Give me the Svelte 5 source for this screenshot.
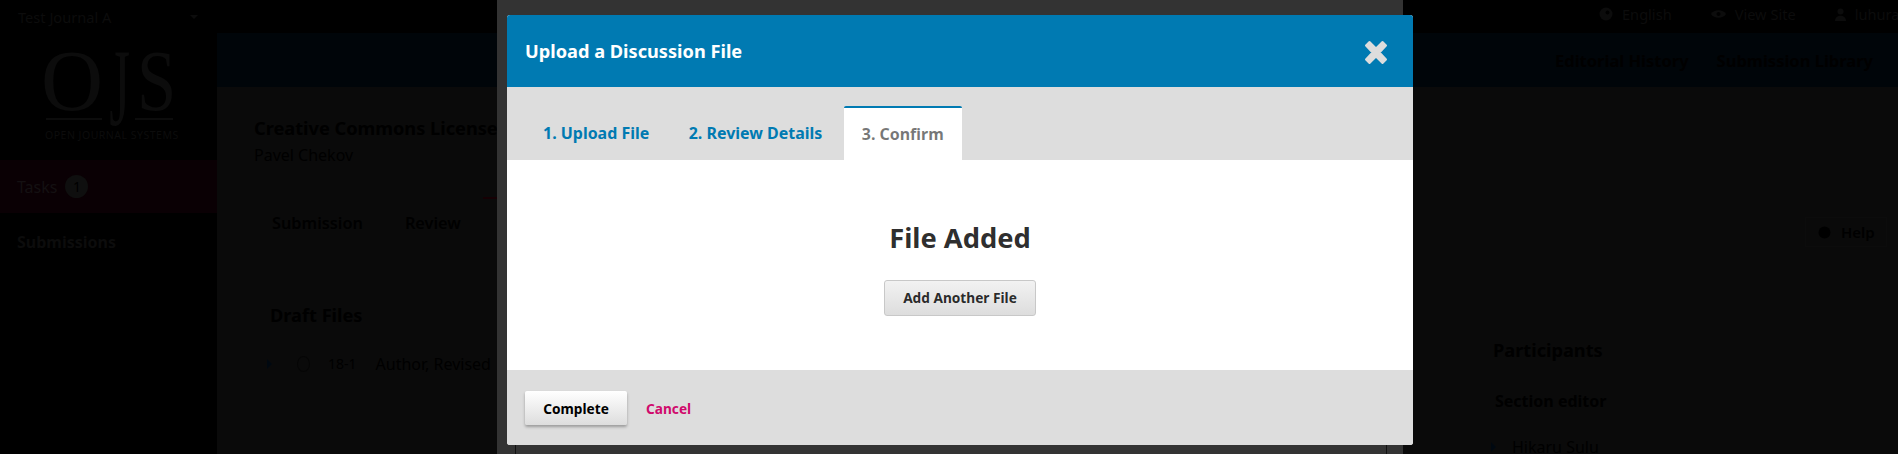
<script>
	const sideNav = [
		{ label: 'Tasks', badge: 1, active: true },
		{ label: 'Submissions' }
	];
	const stageTabs = ['Submission', 'Review'];
	const wizardTabs = ['1. Upload File', '2. Review Details', '3. Confirm'];
</script>

<div class="page">
	<header class="topbar">
		<div class="journal">
			<span>Test Journal A</span>
			<span class="caret"></span>
		</div>
		<div class="user-links">
			<span class="link">
				<svg width="14" height="14" viewBox="0 0 14 14"><circle cx="7" cy="7" r="6.5" fill="#0c0c0c"></circle><circle cx="8.5" cy="5.5" r="2" fill="#000"></circle></svg>
				English
			</span>
			<span class="link">
				<svg width="15" height="12" viewBox="0 0 15 12"><path d="M0 6c3-5 12-5 15 0-3 5-12 5-15 0z" fill="#0c0c0c"></path><circle cx="7.5" cy="6" r="2" fill="#000"></circle></svg>
				View Site
			</span>
			<span class="link">
				<svg width="11" height="13" viewBox="0 0 11 13"><circle cx="5.5" cy="3.5" r="3" fill="#0c0c0c"></circle><path d="M0 13c0-7 11-7 11 0z" fill="#0c0c0c"></path></svg>
				luhura
			</span>
		</div>
	</header>

	<div class="columns">
		<aside class="sidebar">
			<div class="logo">
				<div class="logo-mark">
					<span>O</span>
					<span class="logo-j">J</span>
					<span class="logo-s">S</span>
				</div>
				<div class="logo-rule">
					<span></span>
					<span></span>
				</div>
				<div class="logo-sub">OPEN JOURNAL SYSTEMS</div>
			</div>
			<nav>
				{#each sideNav as item}
					<div class="nav-item" class:active={item.active}>
						<span>{item.label}</span>
						{#if item.badge}
							<span class="badge">{item.badge}</span>
						{/if}
					</div>
				{/each}
			</nav>
		</aside>

		<div class="main">
			<div class="subbar">
				<span>Editorial History</span>
				<span>Submission Library</span>
			</div>
			<div class="content">
				<div class="left">
					<h2 class="sub-title">Creative Commons License</h2>
					<div class="sub-author">Pavel Chekov</div>
					<div class="stages">
						{#each stageTabs as tab}
							<span>{tab}</span>
						{/each}
						<span class="stage-current"></span>
					</div>
					<h3 class="draft">Draft Files</h3>
					<div class="file-row">
						<span class="arrow"></span>
						<span class="ring"></span>
						<span class="file-id">18-1</span>
						<span class="file-name">Author, Revised</span>
					</div>
				</div>
				<div class="right">
					<div class="help">
						<svg width="13" height="13" viewBox="0 0 13 13"><circle cx="6.5" cy="6.5" r="6" fill="#000"></circle></svg>
						Help
					</div>
					<h3 class="participants">Participants</h3>
					<div class="role">Section editor</div>
					<div class="person"><span class="arrow"></span>Hikaru Sulu</div>
				</div>
			</div>
		</div>
	</div>

	<div class="back-panel">
		<div class="back-inner"></div>
	</div>

	<div class="modal">
		<header class="modal-head">
			<h1>Upload a Discussion File</h1>
			<svg class="close" width="24" height="25" viewBox="0 0 24 25">
				<path d="M5.5 2 12 8.5 18.5 2 22 5.5 15.5 12.5 22 19.5 18.5 23 12 16.5 5.5 23 2 19.5 8.5 12.5 2 5.5z" fill="#ddd" stroke="#ddd" stroke-width="2" stroke-linejoin="round"></path>
			</svg>
		</header>
		<div class="tabs">
			{#each wizardTabs as tab, i}
				<span class="tab" class:current={i === wizardTabs.length - 1}>{tab}</span>
			{/each}
		</div>
		<div class="modal-body">
			<h2>File Added</h2>
			<button class="btn-add">Add Another File</button>
		</div>
		<footer class="modal-foot">
			<button class="btn-complete">Complete</button>
			<span class="cancel">Cancel</span>
		</footer>
	</div>
</div>

<style>
	:global(body) {
		margin: 0;
		background: #000;
		font-family: 'Noto Sans', sans-serif;
		overflow: hidden;
	}

	.page {
		position: relative;
		width: 1898px;
		height: 454px;
		overflow: hidden;
		background: #000;
		font-size: 16px;
	}

	.topbar {
		height: 33px;
		display: flex;
		justify-content: space-between;
		align-items: center;
		padding-left: 18px;
		font-size: 14.6px;
		color: #0c0c0c;
	}

	.journal {
		display: flex;
		align-items: center;
		gap: 79px;
	}

	.caret {
		width: 0;
		height: 0;
		border-left: 4px solid transparent;
		border-right: 4px solid transparent;
		border-top: 4px solid #0c0c0c;
	}

	.user-links {
		display: flex;
		gap: 39px;
		position: absolute;
		left: 1599px;
		top: 4px;
		white-space: nowrap;
	}

	.link {
		display: flex;
		align-items: center;
		gap: 9px;
	}

	.columns {
		display: flex;
		height: 421px;
	}

	.sidebar {
		width: 217px;
		flex: none;
	}

	.logo {
		height: 127px;
		padding: 15px 0 0 41px;
		box-sizing: border-box;
		color: #0c0c0c;
	}

	.logo-mark {
		display: flex;
		font-family: 'Liberation Serif', serif;
		font-size: 86px;
		line-height: 66px;
		height: 66px;
	}

	.logo-j {
		transform: scale(0.62, 1.28);
		transform-origin: 50% 10px;
	}

	.logo-s {
		transform: scaleX(0.82);
		transform-origin: 0 0;
	}

	.logo-rule {
		display: flex;
		gap: 33px;
		margin: 4px 0 0 5px;
	}

	.logo-rule span {
		height: 2px;
		background: #0c0c0c;
	}

	.logo-rule span:first-child {
		width: 56px;
	}

	.logo-rule span:last-child {
		width: 38px;
	}

	.logo-sub {
		margin: 9px 0 0 4px;
		font-size: 10.5px;
		letter-spacing: 0.5px;
		line-height: 12px;
		white-space: nowrap;
	}

	.nav-item {
		display: flex;
		align-items: center;
		gap: 8px;
		height: 58px;
		padding-left: 17px;
		font-weight: 700;
		color: #0c0c0c;
	}

	.nav-item.active {
		height: 53px;
		font-weight: 400;
		background: #0a0004;
		color: #141012;
	}

	.badge {
		width: 23px;
		height: 23px;
		border-radius: 50%;
		background: #0f0f0f;
		color: #000;
		display: grid;
		place-items: center;
		font-size: 14px;
	}

	.main {
		flex: 1;
		min-width: 0;
		display: flex;
		flex-direction: column;
	}

	.subbar {
		height: 54px;
		flex: none;
		background: #000509;
		display: flex;
		justify-content: flex-end;
		align-items: center;
		gap: 28px;
		padding-right: 25px;
		font-size: 16.5px;
		font-weight: 700;
		color: #000;
	}

	.content {
		flex: 1;
		background: #0a0a0a;
		display: flex;
		justify-content: space-between;
		color: #000;
	}

	.left {
		padding: 28px 0 0 37px;
	}

	.sub-title {
		margin: 0;
		font-size: 18.2px;
		line-height: 26px;
		white-space: nowrap;
	}

	.sub-author {
		line-height: 24px;
		margin-top: 2px;
	}

	.stages {
		display: flex;
		gap: 42px;
		margin: 45px 0 0 18px;
		font-size: 16.3px;
		line-height: 22px;
		font-weight: 600;
	}

	.stage-current {
		width: 40px;
		height: 2px;
		margin: -15px 0 0 -20px;
		background: #160004;
	}

	.draft {
		margin: 68px 0 0 16px;
		font-size: 18.2px;
		line-height: 26px;
	}

	.file-row {
		display: flex;
		align-items: center;
		margin: 25px 0 0 13px;
		line-height: 22px;
		white-space: nowrap;
	}

	.arrow {
		flex: none;
		width: 0;
		height: 0;
		border-top: 5px solid transparent;
		border-bottom: 5px solid transparent;
		border-left: 5px solid #000810;
	}

	.ring {
		width: 11px;
		height: 14px;
		margin-left: 25px;
		border: 1px solid #060606;
		border-radius: 50%;
	}

	.file-id {
		margin-left: 18px;
		font-size: 14px;
	}

	.file-name {
		margin-left: 19px;
	}

	.right {
		width: 405px;
		flex: none;
		box-sizing: border-box;
		display: flex;
		flex-direction: column;
		padding-right: 11px;
	}

	.help {
		align-self: flex-end;
		box-sizing: border-box;
		width: 82px;
		height: 30px;
		margin-top: 130px;
		padding-left: 12px;
		display: flex;
		align-items: center;
		gap: 10px;
		font-size: 15px;
		font-weight: 600;
		border: 1px solid #0c0c0c;
	}

	.participants {
		margin: 90px 0 0;
		font-size: 18.2px;
		line-height: 26px;
	}

	.role {
		margin: 27px 0 0 2px;
		font-weight: 700;
		line-height: 22px;
	}

	.person {
		display: flex;
		align-items: center;
		gap: 16px;
		margin: 24px 0 0 -2px;
		line-height: 22px;
	}

	/* dimmed first modal behind the current one */
	.back-panel {
		position: absolute;
		top: 0;
		left: 497px;
		width: 906px;
		height: 454px;
		background: #333;
	}

	.back-inner {
		position: absolute;
		top: 445px;
		left: 18px;
		width: 872px;
		height: 9px;
		border-left: 1px solid #111;
		border-right: 1px solid #111;
		box-sizing: border-box;
	}

	.modal {
		position: absolute;
		top: 15px;
		left: 507px;
		width: 906px;
		height: 430px;
		border-radius: 3px;
		overflow: hidden;
		display: flex;
		flex-direction: column;
		background: #fff;
	}

	.modal-head {
		height: 72px;
		box-sizing: border-box;
		flex: none;
		background: #007ab2;
		color: #fff;
		display: flex;
		justify-content: space-between;
		align-items: center;
		padding: 0 25px 0 18px;
	}

	.modal-head h1 {
		margin: 0;
		font-size: 18.2px;
		font-weight: 700;
		line-height: 26px;
	}

	.close {
		margin-top: 3px;
	}

	.tabs {
		height: 73px;
		flex: none;
		background: #ddd;
		display: flex;
		align-items: flex-end;
		gap: 3.5px;
		padding-left: 18px;
		font-size: 15.96px;
		font-weight: 700;
		color: #007ab2;
	}

	.tab {
		padding: 0 18px;
		height: 54px;
		line-height: 54px;
		box-sizing: border-box;
	}

	.tab.current {
		background: #fff;
		color: rgba(0, 0, 0, 0.54);
		border-top: 2px solid #007ab2;
		border-radius: 2px 2px 0 0;
		line-height: 52px;
	}

	.modal-body {
		flex: 1;
		display: flex;
		flex-direction: column;
		align-items: center;
		padding-top: 58px;
		box-sizing: border-box;
	}

	.modal-body h2 {
		margin: 0;
		font-size: 27.3px;
		line-height: 40px;
		font-weight: 700;
		color: rgba(0, 0, 0, 0.84);
	}

	.btn-add {
		margin-top: 22px;
		height: 36px;
		width: 152px;
		padding: 0 0 2px;
		font: 700 13.68px 'Noto Sans', sans-serif;
		color: rgba(0, 0, 0, 0.84);
		background: linear-gradient(#f2f2f2, #ddd);
		border: 1px solid #c8c8c8;
		border-radius: 3px;
	}

	.modal-foot {
		height: 75px;
		flex: none;
		background: #ddd;
		display: flex;
		align-items: center;
		gap: 19px;
		padding-left: 18px;
		font-size: 13.68px;
	}

	.btn-complete {
		height: 34px;
		width: 102px;
		padding: 1px 0 0;
		font: 700 13.68px 'Noto Sans', sans-serif;
		color: #000;
		background: linear-gradient(#fff, #ddd);
		border: none;
		border-radius: 2px;
		box-shadow: 0 2px 3px rgba(0, 0, 0, 0.3);
	}

	.cancel {
		margin-top: 1px;
		font-weight: 700;
		color: #d00a6c;
	}
</style>
